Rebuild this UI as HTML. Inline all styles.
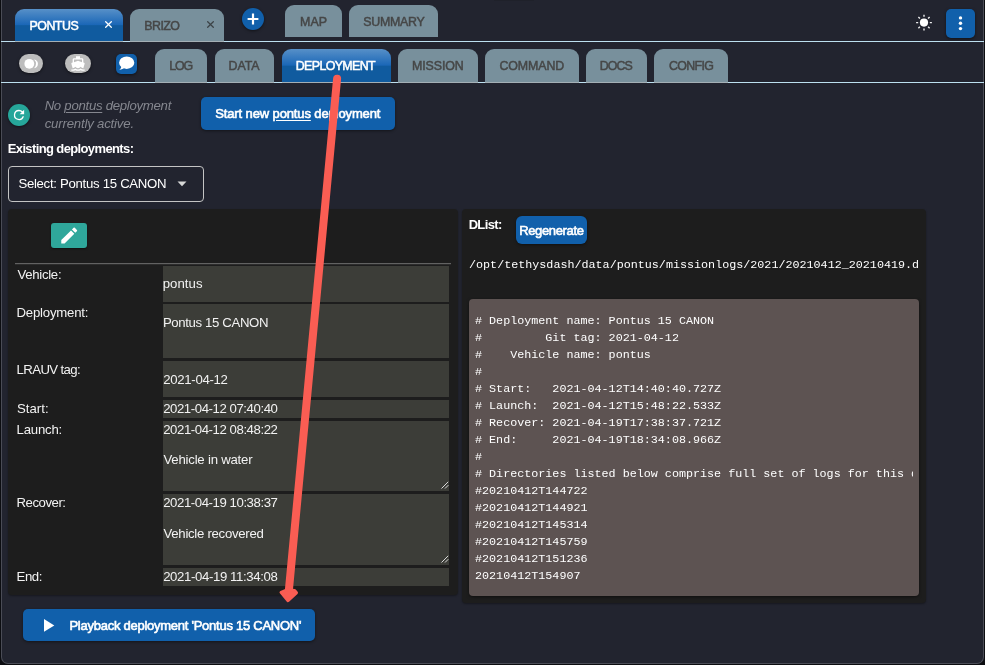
<!DOCTYPE html>
<html lang="en">
<head>
<meta charset="utf-8">
<title>TethysDash - Pontus deployment</title>
<style>
*{box-sizing:border-box;margin:0;padding:0}
html,body{width:985px;height:665px;overflow:hidden;background:#0c0d11;font-family:"Liberation Sans",sans-serif;}
#win{position:absolute;left:1px;top:-6px;width:983px;height:670px;background:#22242f;border:1px solid #4a4c56;border-top:none;border-radius:0 0 7px 7px;overflow:hidden}
#app{position:absolute;left:-2px;top:6px;width:985px;height:665px;will-change:transform}
.abs{position:absolute}
.t{position:absolute;white-space:pre;line-height:16px;font-family:"Liberation Sans",sans-serif}
.u{text-decoration:underline;text-decoration-thickness:1.2px;text-underline-offset:1.5px}
.tab{position:absolute;border-radius:9px 9px 0 0;background:#78909c}
.tab.on{background:linear-gradient(#5790c8 0%,#1b67b7 49%,#105b9f 52%,#105b9f 100%)}
.hline{position:absolute;left:1px;width:983px;height:1px;background:#bde0f0}
.btn{position:absolute;background:#1160ab;border-radius:5px;box-shadow:0 1px 3px rgba(0,0,0,.45)}
.fld{position:absolute;left:163px;width:286px;background:#3c3d38}
.panel{position:absolute;background:#1d1d1d;border-radius:4px;box-shadow:0 1px 2px rgba(0,0,0,.35)}
.mono{font-family:"Liberation Mono",monospace;color:#fff;white-space:pre}
</style>
</head>
<body>
<div id="win"><div id="app">
<!-- vehicle tabs -->
<div class="abs" style="left:494px;top:0;width:40px;height:1px;background:#1f212a"></div>
<div class="tab on" style="left:15px;top:9px;width:108px;height:32px"></div>
<div class="t" style="left:29.46px;top:18px;font-size:12.4px;-webkit-text-stroke:0.5px;letter-spacing:-0.486px;color:#fff;">PONTUS</div>
<svg class="abs" style="left:105.4px;top:21.4px;color:#fff" width="7" height="7" viewBox="0 0 7 7"><path d="M0.3 0.3L6.7 6.7M6.7 0.3L0.3 6.7" stroke="currentColor" stroke-width="1.25" fill="none"/></svg>
<div class="tab" style="left:130px;top:9px;width:94px;height:32px"></div>
<div class="t" style="left:144.36px;top:18px;font-size:12.4px;-webkit-text-stroke:0.5px;letter-spacing:-0.59px;color:#464747;">BRIZO</div>
<svg class="abs" style="left:206.8px;top:21.4px;color:#3c4347" width="7" height="7" viewBox="0 0 7 7"><path d="M0.3 0.3L6.7 6.7M6.7 0.3L0.3 6.7" stroke="currentColor" stroke-width="1.25" fill="none"/></svg>
<div class="abs" style="left:242px;top:8.400px;width:22px;height:22px;border-radius:50%;background:#1160ab;box-shadow:0 1px 3px rgba(0,0,0,.5)"><svg width="22" height="22" viewBox="0 0 22 22"><path d="M11 5.6v10.8M5.6 11h10.8" stroke="#fff" stroke-width="2.2" fill="none"/></svg></div>
<div class="tab" style="left:285px;top:5.4px;width:57px;height:32.0px"></div>
<div class="t" style="left:299.96px;top:14px;font-size:12.4px;-webkit-text-stroke:0.5px;letter-spacing:0.165px;color:#464747;">MAP</div>
<div class="tab" style="left:349px;top:5.4px;width:89px;height:32.0px"></div>
<div class="t" style="left:363.19px;top:14px;font-size:12.4px;-webkit-text-stroke:0.5px;letter-spacing:-0.256px;color:#464747;">SUMMARY</div>
<!-- section tabs -->
<div class="tab" style="left:155px;top:49px;width:52px;height:33px"></div>
<div class="t" style="left:169.16px;top:58px;font-size:12.4px;-webkit-text-stroke:0.5px;letter-spacing:-1.131px;color:#464747;">LOG</div>
<div class="tab" style="left:215px;top:49px;width:59px;height:33px"></div>
<div class="t" style="left:228.56px;top:58px;font-size:12.4px;-webkit-text-stroke:0.5px;letter-spacing:-0.052px;color:#464747;">DATA</div>
<div class="tab on" style="left:282px;top:49px;width:109px;height:33px"></div>
<div class="t" style="left:295.76px;top:58px;font-size:12.4px;-webkit-text-stroke:0.5px;letter-spacing:-0.616px;color:#fff;">DEPLOYMENT</div>
<div class="tab" style="left:398px;top:49px;width:80px;height:33px"></div>
<div class="t" style="left:412.06px;top:58px;font-size:12.4px;-webkit-text-stroke:0.5px;letter-spacing:-0.112px;color:#464747;">MISSION</div>
<div class="tab" style="left:485px;top:49px;width:94px;height:33px"></div>
<div class="t" style="left:499.44px;top:58px;font-size:12.4px;-webkit-text-stroke:0.5px;letter-spacing:-0.101px;color:#464747;">COMMAND</div>
<div class="tab" style="left:586px;top:49px;width:61px;height:33px"></div>
<div class="t" style="left:599.76px;top:58px;font-size:12.4px;-webkit-text-stroke:0.5px;letter-spacing:-0.934px;color:#464747;">DOCS</div>
<div class="tab" style="left:654px;top:49px;width:74px;height:33px"></div>
<div class="t" style="left:668.94px;top:58px;font-size:12.4px;-webkit-text-stroke:0.5px;letter-spacing:-0.64px;color:#464747;">CONFIG</div>
<!-- row icons -->
<div class="abs" style="left:19px;top:54px;width:24.300px;height:19px;border-radius:9.5px;background:#bdbdbd;box-shadow:0 1px 3px rgba(0,0,0,.5)">
<svg class="abs" style="left:0;top:0" width="24.5" height="19" viewBox="0 0 24.5 19"><circle cx="10.3" cy="9.8" r="4.9" fill="#fff"/><path d="M15.1 5.400A4.500 4.500 0 0 1 15.100 14.300A6.160 6.160 0 0 0 15.100 5.400z" fill="#fff"/></svg></div>
<div class="abs" style="left:65px;top:54px;width:26px;height:19px;border-radius:9.5px;background:#bdbdbd;box-shadow:0 1px 3px rgba(0,0,0,.5)">
<svg class="abs" style="left:5.100px;top:0.800px" width="16" height="17" viewBox="0 0 24 24"><path fill="#fff" d="M20 21c-1.39 0-2.78-.47-4-1.32-2.44 1.71-5.56 1.71-8 0C6.780 20.530 5.390 21 4 21H2v2h2c1.380 0 2.740-.35 4-.99 2.520 1.290 5.480 1.290 8 0 1.260.65 2.620.99 4 .99h2v-2h-2zM3.950 19H4c1.600 0 3.020-.88 4-2 .98 1.120 2.400 2 4 2s3.020-.88 4-2c.98 1.120 2.400 2 4 2h.05l1.890-6.680c.08-.26.06-.54-.06-.78s-.34-.42-.6-.5L20 10.620V6c0-1.100-.9-2-2-2h-3V1H9v3H6c-1.100 0-2 .9-2 2v4.620l-1.290.42c-.26.08-.48.26-.6.5s-.15.520-.06.780L3.950 19zM6 6h12v3.970L12 8 6 9.970V6z"/></svg></div>
<div class="abs" style="left:116px;top:54px;width:21px;height:20px;border-radius:5px;background:#1160ab;box-shadow:0 1px 3px rgba(0,0,0,.5)">
<svg class="abs" style="left:0;top:0" width="21" height="20" viewBox="0 0 21 20"><ellipse cx="10.7" cy="8.7" rx="7.6" ry="6.2" fill="#fff"/><path d="M5.5 11.5c0 2-.8 3.300-2.200 4.200 2.400 0 4-.8 5.200-2.200z" fill="#fff"/></svg></div>

<!-- sun + menu -->
<svg class="abs" style="left:914px;top:12px" width="20" height="21" viewBox="-10 -10.600 20 21"><circle r="4.1" fill="#fff"/><g stroke="#fff" stroke-width="1.400" opacity="0.92"><path d="M0 -5.800V-7.900M0 5.800V7.900M-5.800 0H-7.900M5.800 0H7.900M4.100 4.100L5.600 5.600M-4.100 4.100L-5.600 5.600M4.100 -4.100L5.600 -5.600M-4.100 -4.100L-5.600 -5.600"/></g></svg>
<div class="abs" style="left:946px;top:9px;width:29px;height:29px;border-radius:5px;background:#1160ab;box-shadow:0 1px 3px rgba(0,0,0,.5)">
<svg width="29" height="29" viewBox="0 0 29 29"><circle cx="14.500" cy="8.900" r="1.700" fill="#fff"/><circle cx="14.500" cy="14.200" r="1.700" fill="#fff"/><circle cx="14.500" cy="19.600" r="1.700" fill="#fff"/></svg></div>


<!-- status row -->
<div class="abs" style="left:8px;top:104px;width:22px;height:22px;border-radius:50%;background:#26a69a;box-shadow:0 1px 3px rgba(0,0,0,.5)"><svg width="22" height="22" viewBox="0 0 24 24"><path fill="#fff" d="M17.65 6.35A7.96 7.96 0 0 0 12 4a8 8 0 1 0 7.73 10h-2.08A6 6 0 1 1 12 6c1.66 0 3.14.69 4.22 1.780L13 11h7V4l-2.350 2.350z" transform="translate(3.6 3.6) scale(0.7)"/></svg></div>
<div class="t" style="left:44.63px;top:98px;font-size:13.2px;font-style:italic;letter-spacing:-0.278px;color:#85878f;">No <span class="u">pontus</span> deployment</div>
<div class="t" style="left:44.66px;top:116px;font-size:13.2px;font-style:italic;letter-spacing:-0.183px;color:#85878f;">currently active.</div>
<div class="btn" style="left:201px;top:97px;width:194.400px;height:32.500px"></div>
<div class="t" style="left:215.19px;top:106px;font-size:13px;-webkit-text-stroke:0.6px;letter-spacing:-0.12px;color:#fff;">Start new <span class="u">pontus</span> deployment</div>
<div class="t" style="left:7.73px;top:141px;font-size:13px;font-weight:bold;letter-spacing:-0.621px;color:#fff;">Existing deployments:</div>
<div class="abs" style="left:8px;top:166px;width:196px;height:36px;border:1px solid #c4c4c4;border-radius:4px"></div>
<div class="t" style="left:18.4px;top:176px;font-size:13.2px;letter-spacing:-0.294px;color:#fff;">Select: Pontus 15 CANON</div>
<svg class="abs" style="left:177px;top:181px" width="10" height="6" viewBox="0 0 10 6"><path d="M0.5 0.6h9L5 5.300z" fill="#d8d8d8"/></svg>
<!-- deployment details panel -->
<div class="panel" style="left:8px;top:209px;width:450px;height:386px"></div>
<div class="abs" style="left:51px;top:223px;width:36px;height:25px;border-radius:3px;background:#2fa79b;box-shadow:0 1px 2px rgba(0,0,0,.5)"><svg width="36" height="25" viewBox="0 0 36 25"><path fill="#fff" d="M3 17.250V21h3.750L17.810 9.940l-3.750-3.750L3 17.250zM20.710 7.040a1 1 0 0 0 0-1.410l-2.340-2.340a1 1 0 0 0-1.410 0l-1.830 1.830 3.750 3.750 1.830-1.830z" transform="translate(7.640 1.940) scale(0.88)"/></svg></div>
<div class="abs" style="left:15px;top:263px;width:436px;height:1px;background:#626262;box-shadow:0 1px 0 rgba(98,98,98,.22)"></div>
<div class="fld" style="top:266px;height:36px"></div>
<div class="fld" style="top:304px;height:54px"></div>
<div class="fld" style="top:361px;height:36px"></div>
<div class="fld" style="top:400px;height:18px"></div>
<div class="fld" style="top:421px;height:70px"></div>
<div class="fld" style="top:494px;height:71px"></div>
<div class="fld" style="top:568px;height:18px"></div>
<svg class="abs" style="left:440.500px;top:481px" width="8" height="8" viewBox="0 0 8 8"><path d="M7.200 0.800L0.500 7.500M7.300 4.200L4 7.500" stroke="#dadada" stroke-width="1" fill="none"/></svg>
<svg class="abs" style="left:440.500px;top:555px" width="8" height="8" viewBox="0 0 8 8"><path d="M7.200 0.800L0.500 7.500M7.300 4.200L4 7.500" stroke="#dadada" stroke-width="1" fill="none"/></svg>
<div class="t" style="left:17.42px;top:267px;font-size:13.2px;letter-spacing:-0.288px;color:#f2f2f2;">Vehicle:</div>
<div class="t" style="left:16.55px;top:305px;font-size:13.2px;letter-spacing:-0.213px;color:#f2f2f2;">Deployment:</div>
<div class="t" style="left:16.55px;top:362px;font-size:13.2px;letter-spacing:-0.604px;color:#f2f2f2;">LRAUV tag:</div>
<div class="t" style="left:16.9px;top:401px;font-size:13.2px;letter-spacing:0.043px;color:#f2f2f2;">Start:</div>
<div class="t" style="left:16.55px;top:422px;font-size:13.2px;letter-spacing:-0.208px;color:#f2f2f2;">Launch:</div>
<div class="t" style="left:16.55px;top:495px;font-size:13.2px;letter-spacing:-0.475px;color:#f2f2f2;">Recover:</div>
<div class="t" style="left:16.55px;top:569px;font-size:13.2px;letter-spacing:-0.446px;color:#f2f2f2;">End:</div>
<div class="t" style="left:162.73px;top:276px;font-size:13.2px;letter-spacing:0.042px;color:#f2f2f2;">pontus</div>
<div class="t" style="left:162.95px;top:315px;font-size:13.2px;letter-spacing:-0.367px;color:#f2f2f2;">Pontus 15 CANON</div>
<div class="t" style="left:163.17px;top:372px;font-size:13.2px;letter-spacing:-0.301px;color:#f2f2f2;">2021-04-12</div>
<div class="t" style="left:163.17px;top:401px;font-size:13.2px;letter-spacing:-0.429px;color:#f2f2f2;">2021-04-12 07:40:40</div>
<div class="t" style="left:163.17px;top:422px;font-size:13.2px;letter-spacing:-0.428px;color:#f2f2f2;">2021-04-12 08:48:22</div>
<div class="t" style="left:163.52px;top:452px;font-size:13.2px;letter-spacing:-0.223px;color:#f2f2f2;">Vehicle in water</div>
<div class="t" style="left:163.17px;top:495px;font-size:13.2px;letter-spacing:-0.428px;color:#f2f2f2;">2021-04-19 10:38:37</div>
<div class="t" style="left:163.52px;top:526px;font-size:13.2px;letter-spacing:-0.283px;color:#f2f2f2;">Vehicle recovered</div>
<div class="t" style="left:163.17px;top:569px;font-size:13.2px;letter-spacing:-0.378px;color:#f2f2f2;">2021-04-19 11:34:08</div>
<!-- playback button -->
<div class="btn" style="left:23px;top:609.300px;width:292px;height:31.700px"></div>
<svg class="abs" style="left:44px;top:618.800px" width="11" height="13" viewBox="0 0 11 13"><path d="M0 0.100v12.600L10.300 6.400z" fill="#fff"/></svg>
<div class="t" style="left:69.45px;top:618px;font-size:13px;-webkit-text-stroke:0.6px;letter-spacing:-0.257px;color:#fff;">Playback deployment 'Pontus 15 CANON'</div>
<!-- dlist panel -->
<div class="panel" style="left:462px;top:209px;width:464px;height:394px"></div>
<div class="t" style="left:468.63px;top:217px;font-size:13px;font-weight:bold;letter-spacing:-0.642px;color:#fff;">DList:</div>
<div class="btn" style="left:516px;top:216px;width:71px;height:28px;border-radius:6px"></div>
<div class="t" style="left:519.15px;top:223px;font-size:13px;-webkit-text-stroke:0.6px;letter-spacing:-0.349px;color:#fff;">Regenerate</div>
<div class="abs mono" style="left:469px;top:257px;width:450px;overflow:hidden;font-size:11.72px;line-height:16px">/opt/tethysdash/data/pontus/missionlogs/2021/20210412_20210419.dlist</div>
<div class="abs" style="left:469px;top:299px;width:450px;height:297px;background:#5d5352;border-radius:4px;box-shadow:0 1px 3px rgba(0,0,0,.5);overflow:hidden"><div class="mono" style="position:absolute;left:6px;top:14px;width:438px;overflow:hidden;font-size:11.72px;line-height:17px"># Deployment name: Pontus 15 CANON
#         Git tag: 2021-04-12
#    Vehicle name: pontus
#
# Start:   2021-04-12T14:40:40.727Z
# Launch:  2021-04-12T15:48:22.533Z
# Recover: 2021-04-19T17:38:37.721Z
# End:     2021-04-19T18:34:08.966Z
#
# Directories listed below comprise full set of logs for this deployment
#20210412T144722
#20210412T144921
#20210412T145314
#20210412T145759
#20210412T151236
20210412T154907</div></div>


</div></div>
<div class="hline" style="top:41px"></div>
<div class="hline" style="top:82px"></div>
<div class="abs" style="left:15px;top:41px;width:108px;height:1px;background:#a4afb5"></div>
<div class="abs" style="left:130px;top:41px;width:94px;height:1px;background:#a4afb5"></div>
<div class="abs" style="left:155px;top:82px;width:52px;height:1px;background:#a4afb5"></div>
<div class="abs" style="left:215px;top:82px;width:59px;height:1px;background:#a4afb5"></div>
<div class="abs" style="left:282px;top:82px;width:109px;height:1px;background:#a4afb5"></div>
<div class="abs" style="left:398px;top:82px;width:80px;height:1px;background:#a4afb5"></div>
<div class="abs" style="left:485px;top:82px;width:94px;height:1px;background:#a4afb5"></div>
<div class="abs" style="left:586px;top:82px;width:61px;height:1px;background:#a4afb5"></div>
<div class="abs" style="left:654px;top:82px;width:74px;height:1px;background:#a4afb5"></div>
<!-- annotation arrow -->
<svg class="abs" style="left:0;top:0;pointer-events:none" width="985" height="665" viewBox="0 0 985 665"><path d="M337.100 78.700L288.800 591" stroke="#fa5d53" stroke-width="8" stroke-linecap="round" fill="none"/><path d="M281 592.300L287 589.800L294.600 590.500L296.500 592.800L288 600.700z" fill="#fa5d53" stroke="#fa5d53" stroke-width="3" stroke-linejoin="round"/></svg>

</body>
</html>
